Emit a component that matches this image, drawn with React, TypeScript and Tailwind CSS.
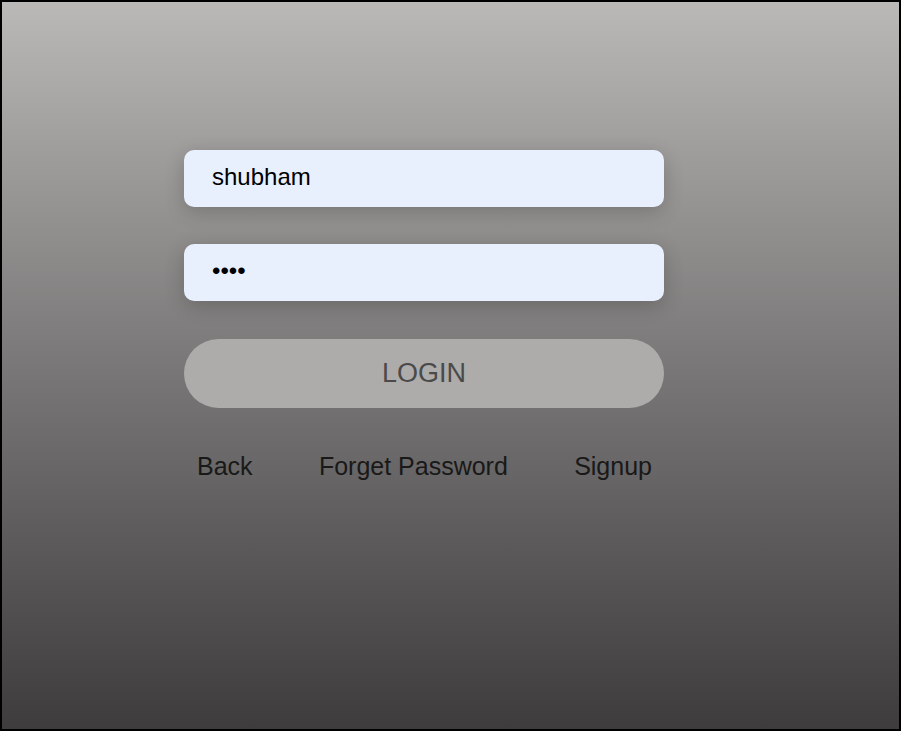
export default function App() {
  return (
    <div className="h-[731px] w-[901px] border-2 border-black bg-gradient-to-b from-[#bbb9b7] to-[#3e3c3d] font-['Liberation_Sans',Arial,sans-serif]">
      <div className="ml-[182px] flex w-[480px] flex-col pt-[148px]">
        <input
          className="h-[57px] w-full rounded-[10px] bg-[#e8f0fe] pb-[4px] pl-[28px] pr-[27px] text-[24px] text-black shadow-[0_5px_20px_rgba(0,0,0,0.2)] outline-none"
          defaultValue="shubham"
        />
        <input
          type="password"
          className="mt-[37px] h-[57px] w-full rounded-[10px] bg-[#e8f0fe] pb-[4px] pl-[28px] pr-[27px] text-[24px] text-black shadow-[0_5px_20px_rgba(0,0,0,0.2)] outline-none"
          defaultValue="abcd"
        />
        <button className="mt-[38px] h-[69px] w-full rounded-full bg-[#adacab] text-[27px] text-[#4b4a4a]">
          LOGIN
        </button>
        <div className="mt-[40px] flex justify-between pl-[13px] pr-[12px] text-[25px] text-[#191919]">
          <a href="#">Back</a>
          <a href="#">Forget Password</a>
          <a href="#">Signup</a>
        </div>
      </div>
    </div>
  );
}
